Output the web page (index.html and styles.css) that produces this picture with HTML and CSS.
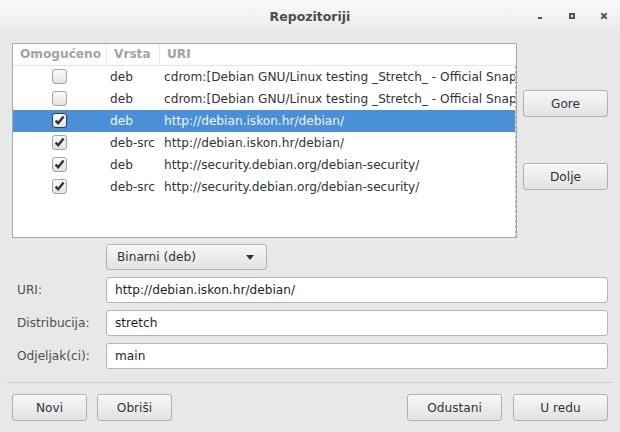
FILE: index.html
```html
<!DOCTYPE html>
<html>
<head>
<meta charset="utf-8">
<title>Repozitoriji</title>
<link rel="stylesheet" href="styles.css">
</head>
<body>
<div class="window">
  <div class="titlebar">
    <div></div>
    <div class="title">Repozitoriji</div>
    <div class="controls">
      <span class="ctl"><svg width="32" height="32" viewBox="0 0 32 32"><rect x="14" y="17" width="4" height="2" fill="#4b5660"/></svg></span>
      <span class="ctl"><svg width="32" height="32" viewBox="0 0 32 32"><rect x="14" y="14" width="4" height="4" fill="none" stroke="#4b5660" stroke-width="2"/></svg></span>
      <span class="ctl"><svg width="32" height="32" viewBox="0 0 32 32"><path d="M14 14L18 18M18 14L14 18" stroke="#4b5660" stroke-width="2" stroke-linecap="square"/></svg></span>
    </div>
  </div>

  <div class="content">
    <div class="top">
      <div class="list">
        <div class="thead">
          <div class="th c1">Omogućeno</div>
          <div class="th c2">Vrsta</div>
          <div class="th c3">URI</div>
        </div>
        <div class="tbody">
          <div class="row">
            <div class="td c1"><span class="cb"></span></div>
            <div class="td c2">deb</div>
            <div class="td c3"><span class="clip">cdrom:[Debian GNU/Linux testing _Stretch_ - Official Snapshot amd64 DVD Binary-1 20160702-11:38]/</span></div>
          </div>
          <div class="row">
            <div class="td c1"><span class="cb"></span></div>
            <div class="td c2">deb</div>
            <div class="td c3"><span class="clip">cdrom:[Debian GNU/Linux testing _Stretch_ - Official Snapshot amd64 DVD Binary-1 20160702-11:38]/</span></div>
          </div>
          <div class="row selected">
            <div class="td c1"><span class="cb on"><svg width="13" height="13" viewBox="0 0 13 13"><path d="M2.6 6.6L5.2 9.2L10.6 2.6" fill="none" stroke="#2e3436" stroke-width="2.4"/></svg></span></div>
            <div class="td c2">deb</div>
            <div class="td c3">http://debian.iskon.hr/debian/</div>
          </div>
          <div class="row">
            <div class="td c1"><span class="cb on"><svg width="13" height="13" viewBox="0 0 13 13"><path d="M2.6 6.6L5.2 9.2L10.6 2.6" fill="none" stroke="#2e3436" stroke-width="2.4"/></svg></span></div>
            <div class="td c2">deb-src</div>
            <div class="td c3">http://debian.iskon.hr/debian/</div>
          </div>
          <div class="row">
            <div class="td c1"><span class="cb on"><svg width="13" height="13" viewBox="0 0 13 13"><path d="M2.6 6.6L5.2 9.2L10.6 2.6" fill="none" stroke="#2e3436" stroke-width="2.4"/></svg></span></div>
            <div class="td c2">deb</div>
            <div class="td c3">http://security.debian.org/debian-security/</div>
          </div>
          <div class="row">
            <div class="td c1"><span class="cb on"><svg width="13" height="13" viewBox="0 0 13 13"><path d="M2.6 6.6L5.2 9.2L10.6 2.6" fill="none" stroke="#2e3436" stroke-width="2.4"/></svg></span></div>
            <div class="td c2">deb-src</div>
            <div class="td c3">http://security.debian.org/debian-security/</div>
          </div>
        </div>
      </div>
      <div class="side">
        <button class="btn side-btn">Gore</button>
        <button class="btn side-btn">Dolje</button>
      </div>
    </div>

    <div class="form">
      <div></div>
      <div class="combo"><span>Binarni (deb)</span><svg width="8" height="5" viewBox="0 0 8 5"><path d="M0 0H8L4 5Z" fill="#2e3436"/></svg></div>
      <label class="lbl">URI:</label>
      <div class="entry">http://debian.iskon.hr/debian/</div>
      <label class="lbl">Distribucija:</label>
      <div class="entry">stretch</div>
      <label class="lbl">Odjeljak(ci):</label>
      <div class="entry">main</div>
    </div>

    <div class="sep"></div>

    <div class="actions">
      <button class="btn small">Novi</button>
      <button class="btn small">Obriši</button>
      <div class="spacer"></div>
      <button class="btn wide">Odustani</button>
      <button class="btn wide">U redu</button>
    </div>
  </div>
</div>
</body>
</html>
```
FILE: styles.css
```css
html, body {
  margin: 0;
  padding: 0;
}
body {
  width: 620px;
  height: 432px;
  background: #e8e8e8;
  font-family: "DejaVu Sans", sans-serif;
  font-size: 12.15px;
  color: #2e3436;
  overflow: hidden;
}
.window {
  width: 620px;
  height: 432px;
}
.titlebar {
  height: 32px;
  display: grid;
  grid-template-columns: 96px 1fr 96px;
  align-items: center;
  background: linear-gradient(#f9f9f9, #eaeaea);
}
.title {
  text-align: center;
  font-weight: bold;
  font-size: 12.5px;
  color: #4c4c4c;
}
.controls {
  display: flex;
  height: 32px;
}
.ctl {
  width: 32px;
  height: 32px;
  display: block;
}
.ctl svg { display: block; }

.content {
  padding: 11px 12px 0 12px;
}
.top {
  display: flex;
  gap: 6px;
}
.list {
  width: 505px;
  height: 195px;
  box-sizing: border-box;
  border: 1px solid #a8a8a8;
  background: #fff;
  overflow: hidden;
}
.thead {
  display: flex;
  height: 21px;
  border-bottom: 1px solid #e6e6e6;
}
.th {
  box-sizing: border-box;
  line-height: 21px;
  padding-left: 7px;
  font-weight: bold;
  color: #a3a3a3;
  white-space: nowrap;
}
.thead .c1, .thead .c2 {
  border-right: 1px solid #e8e8e8;
}
.c1 { width: 94px; flex: none; }
.c2 { width: 53px; flex: none; }
.c3 { flex: 1; min-width: 0; }
.tbody {
  height: 172px;
  border-right: 1px dashed #b4b4b4;
}
.row {
  display: flex;
  height: 22px;
}
.td {
  box-sizing: border-box;
  line-height: 22px;
  padding-left: 4px;
  white-space: nowrap;
  overflow: hidden;
}
.clip {
  display: block;
  overflow: hidden;
  text-overflow: clip;
}
.row .c1 {
  width: 93px;
  padding-left: 0;
  display: flex;
  justify-content: center;
  align-items: center;
}
.row .c2 { width: 54px; }
.row.selected {
  background: #4a90d9;
  color: #f2f6fb;
}
.cb {
  width: 15px;
  height: 15px;
  box-sizing: border-box;
  border: 1px solid #a4a4a4;
  border-radius: 3px;
  background: linear-gradient(#fbfbfb, #e2e2e2);
  display: flex;
  align-items: center;
  justify-content: center;
  margin-top: -1px;
}
.cb svg { display: block; }
.selected .cb {
  border-color: #2e3f52;
}

.side {
  width: 85px;
  display: flex;
  flex-direction: column;
  padding-top: 47px;
  gap: 46px;
}
.btn {
  box-sizing: border-box;
  height: 27px;
  border: 1px solid #b0b0b0;
  border-radius: 3px;
  background: linear-gradient(#f7f7f7, #e2e2e2);
  box-shadow: inset 0 1px #ffffff;
  font-family: "DejaVu Sans", sans-serif;
  font-size: 12.15px;
  color: #2e3436;
  padding: 0;
}
.side-btn { width: 85px; }

.form {
  margin-top: 6px;
  display: grid;
  grid-template-columns: 94px 502px;
  grid-auto-rows: 26px;
  row-gap: 7px;
}
.combo {
  width: 161px;
  box-sizing: border-box;
  border: 1px solid #b0b0b0;
  border-radius: 3px;
  background: linear-gradient(#f7f7f7, #e2e2e2);
  box-shadow: inset 0 1px #ffffff;
  display: flex;
  align-items: center;
  justify-content: space-between;
  padding: 0 12px 0 10px;
}
.combo svg { display: block; margin-top: 1px; }
.lbl {
  padding-left: 5px;
  line-height: 26px;
  color: #4f4f4f;
}
.entry {
  box-sizing: border-box;
  border: 1px solid #b3b3b3;
  border-radius: 3px;
  background: #fff;
  line-height: 24px;
  padding-left: 8px;
  color: #1e1e1e;
}
.sep {
  height: 1px;
  background: #d2d2d2;
  margin: 13px -5px 0 -6px;
}
.actions {
  margin-top: 11px;
  display: flex;
}
.small { width: 75px; margin-right: 10px; }
.spacer { flex: 1; }
.wide { width: 95px; }
.wide + .wide { margin-left: 11px; }
```
